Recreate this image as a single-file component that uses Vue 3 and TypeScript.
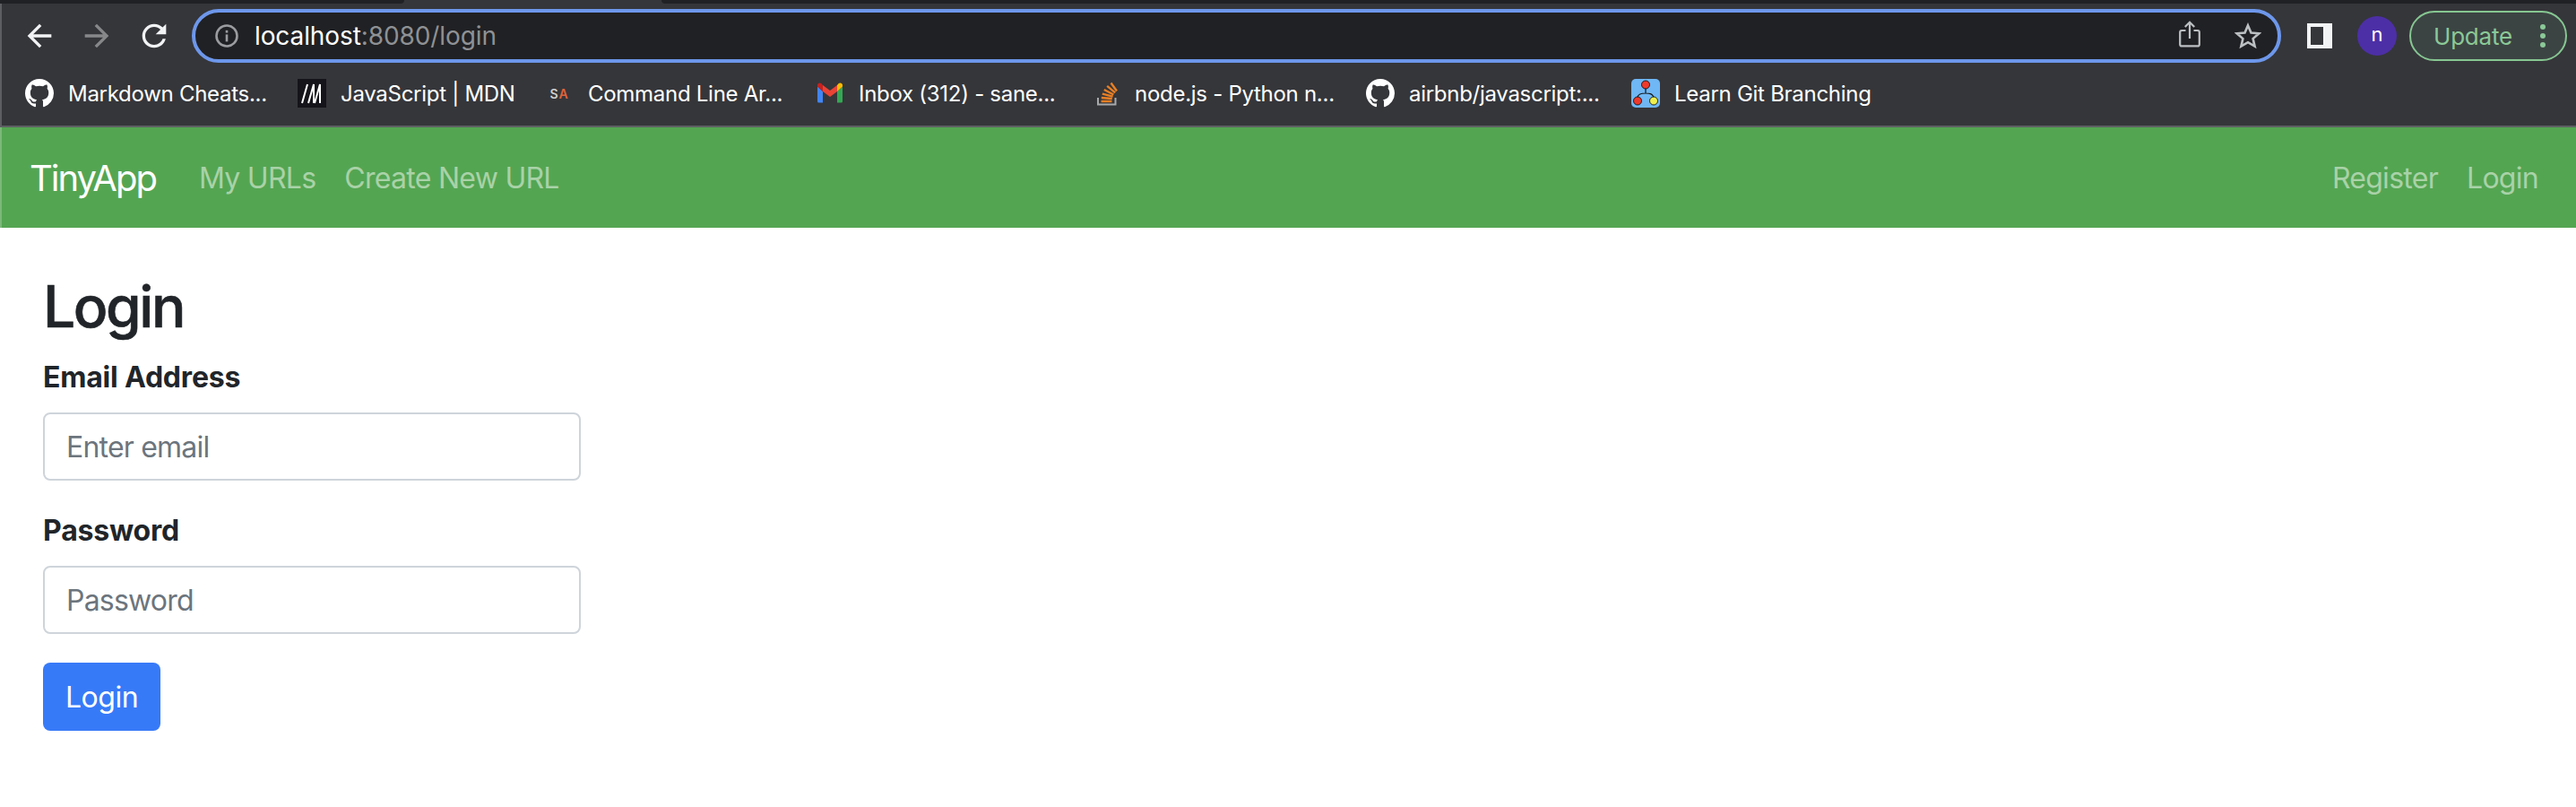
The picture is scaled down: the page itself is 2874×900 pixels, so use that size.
<script setup lang="ts">
interface Bookmark {
  label: string
  icon: string
  width: number
}

const bookmarks: Bookmark[] = [
  { label: 'Markdown Cheats...', icon: 'github', width: 304 },
  { label: 'JavaScript | MDN', icon: 'mdn', width: 276 },
  { label: 'Command Line Ar...', icon: 'sa', width: 302 },
  { label: 'Inbox (312) - sane...', icon: 'gmail', width: 308 },
  { label: 'node.js - Python n...', icon: 'so', width: 306 },
  { label: 'airbnb/javascript:...', icon: 'github', width: 296 },
  { label: 'Learn Git Branching', icon: 'git', width: 300 },
]

const githubPath =
  'M8 0C3.58 0 0 3.58 0 8c0 3.54 2.29 6.53 5.47 7.59.4.07.55-.17.55-.38 0-.19-.01-.82-.01-1.49-2.01.37-2.53-.49-2.69-.94-.09-.23-.48-.94-.82-1.13-.28-.15-.68-.52-.01-.53.63-.01 1.08.58 1.23.82.72 1.21 1.87.87 2.33.66.07-.52.28-.87.51-1.07-1.78-.2-3.64-.89-3.64-3.95 0-.87.31-1.59.82-2.15-.08-.2-.36-1.02.08-2.12 0 0 .67-.21 2.2.82.64-.18 1.32-.27 2-.27.68 0 1.36.09 2 .27 1.53-1.04 2.2-.82 2.2-.82.44 1.1.16 1.92.08 2.12.51.56.82 1.27.82 2.15 0 3.07-1.87 3.75-3.65 3.95.29.25.54.73.54 1.48 0 1.07-.01 1.93-.01 2.2 0 .21.15.46.55.38A8.013 8.013 0 0016 8c0-4.42-3.58-8-8-8z'
</script>

<template>
  <div class="page">
    <header class="chrome">
      <div class="tabstrip">
        <div class="strip strip-left"></div>
        <div class="strip strip-right"></div>
      </div>
      <div class="toolbar">
        <button class="nav-btn" aria-label="Back">
          <svg width="40" height="40" viewBox="0 0 24 24"><path fill="#f1f3f4" d="M20 11H7.83l5.59-5.59L12 4l-8 8 8 8 1.41-1.41L7.83 13H20v-2z" /></svg>
        </button>
        <button class="nav-btn" aria-label="Forward">
          <svg width="40" height="40" viewBox="0 0 24 24"><path fill="#86888a" d="M4 11h12.17l-5.59-5.59L12 4l8 8-8 8-1.41-1.41L16.17 13H4v-2z" /></svg>
        </button>
        <button class="nav-btn" aria-label="Reload">
          <svg width="40" height="40" viewBox="0 0 24 24"><path fill="#f1f3f4" d="M17.65 6.35A7.95 7.95 0 0 0 12 4c-4.42 0-7.99 3.58-7.99 8s3.57 8 7.99 8c3.73 0 6.84-2.55 7.73-6h-2.08c-.82 2.33-3.04 4-5.65 4-3.31 0-6-2.69-6-6s2.69-6 6-6c1.66 0 3.14.69 4.22 1.78L13 11h7V4l-2.35 2.35z" /></svg>
        </button>
        <div class="omnibox">
          <svg class="info" width="28" height="28" viewBox="0 0 28 28">
            <circle cx="14" cy="14" r="11.5" fill="none" stroke="#9a9c9f" stroke-width="2.6" />
            <rect x="12.7" y="12.4" width="2.6" height="8" fill="#9a9c9f" />
            <rect x="12.7" y="7.8" width="2.6" height="2.8" fill="#9a9c9f" />
          </svg>
          <span class="url"><span class="host">localhost</span><span class="path">:8080/login</span></span>
          <svg class="share" width="24" height="30" viewBox="0 0 24 30">
            <path d="M7.5 11H3.2A2 2 0 0 0 1.2 13v13.4a2 2 0 0 0 2 2h17.6a2 2 0 0 0 2-2V13a2 2 0 0 0-2-2h-4.3" fill="none" stroke="#bdc0c3" stroke-width="2.2" />
            <path d="M12 20V2M6.8 7L12 1.8 17.2 7" fill="none" stroke="#bdc0c3" stroke-width="2.2" />
          </svg>
          <svg class="star" width="30" height="30" viewBox="0 0 30 30">
            <path d="M15 3.4l3.5 8.1 8.8.8-6.7 5.8 2 8.6-7.6-4.5-7.6 4.5 2-8.6-6.7-5.8 8.8-.8z" fill="none" stroke="#bdc0c3" stroke-width="2.6" stroke-linejoin="miter" />
          </svg>
        </div>
        <div class="panel-icon"><span class="panel-inner"></span></div>
        <div class="avatar">n</div>
        <div class="update">
          <span class="update-label">Update</span>
          <span class="dots"><i></i><i></i><i></i></span>
        </div>
      </div>
      <nav class="bookmarks">
        <a
          v-for="b in bookmarks"
          :key="b.label"
          class="bookmark"
          :style="{ width: b.width + 'px' }"
        >
          <span class="favicon">
            <svg v-if="b.icon === 'github'" width="32" height="32" viewBox="0 0 16 16"><path fill="#fff" :d="githubPath" /></svg>
            <svg v-else-if="b.icon === 'mdn'" width="32" height="32" viewBox="0 0 32 32">
              <rect width="32" height="32" fill="#15141a" />
              <path d="M5 27L11 6M12 27L18 6V27M19 27L25 6V27" stroke="#fff" stroke-width="2" fill="none" />
            </svg>
            <span v-else-if="b.icon === 'sa'" class="sa"><span class="sa-s">S</span><span class="sa-a">A</span></span>
            <svg v-else-if="b.icon === 'gmail'" width="32" height="32" viewBox="0 0 32 32">
              <path d="M2 8.5V25a1.5 1.5 0 0 0 1.5 1.5H8V14z" fill="#4285f4" />
              <path d="M24 14v12.500h4.500A1.500 1.500 0 0 0 30 25V8.500z" fill="#34a853" />
              <path d="M8 14L16 20l8-6V7L16 13 8 7z" fill="#ea4335" />
              <path d="M24 7v7l6-5.500V7c0-2.200-2.500-3.400-4.300-2z" fill="#fbbc04" />
              <path d="M2 7v1.500L8 14V7L6.300 5C4.500 3.600 2 4.800 2 7z" fill="#c5221f" />
            </svg>
            <svg v-else-if="b.icon === 'so'" width="32" height="32" viewBox="0 0 32 32">
              <path d="M7 21v7.500h19.500V21" fill="none" stroke="#a8a9ab" stroke-width="2" />
              <path d="M10.500 25h12M10.800 21l12 1M11.800 16.600l11.800 3M13.800 12l10.600 5.500M17.200 7.800l9 7.500M21.500 4.500l6.500 9" fill="none" stroke="#e87f24" stroke-width="2.400" />
            </svg>
            <svg v-else width="32" height="32" viewBox="0 0 32 32">
              <rect width="32" height="32" rx="5" fill="#6fb7f5" />
              <path d="M16 11v5M16 16C10 16 8 17 7 20M16 16c6 0 7 1 9 4" fill="none" stroke="#111" stroke-width="1.200" />
              <circle cx="16" cy="6.500" r="4.500" fill="#ee3a2d" stroke="#111" stroke-width=".9" />
              <circle cx="7" cy="24.500" r="4.500" fill="#ee3a2d" stroke="#111" stroke-width=".9" />
              <circle cx="25" cy="24.500" r="4.500" fill="#eef04e" stroke="#111" stroke-width=".9" />
            </svg>
          </span>
          <span class="bookmark-label">{{ b.label }}</span>
        </a>
      </nav>
    </header>

    <nav class="navbar">
      <a class="brand">TinyApp</a>
      <a class="nav-link">My URLs</a>
      <a class="nav-link">Create New URL</a>
      <span class="nav-spacer"></span>
      <a class="nav-link">Register</a>
      <a class="nav-link">Login</a>
    </nav>

    <main class="content">
      <h2 class="title">Login</h2>
      <form class="form" @submit.prevent>
        <label class="label" for="email">Email Address</label>
        <input id="email" class="input" type="email" placeholder="Enter email" />
        <label class="label label-2" for="password">Password</label>
        <input id="password" class="input" type="password" placeholder="Password" />
        <button class="submit" type="submit">Login</button>
      </form>
    </main>
  </div>
</template>

<style>
html, body { margin: 0; background: #fff; }
</style>

<style scoped>
.page {
  width: 2874px;
  height: 900px;
  overflow: hidden;
  background: #fff;
  font-family: Inter, "Liberation Sans", sans-serif;
  color: #212529;
}

/* Browser chrome */
.chrome {
  box-sizing: border-box;
  height: 142px;
  background: #35363a;
  border-left: 2px solid #5d5e62;
  border-bottom: 2px solid #5d6062;
}
.tabstrip { display: flex; justify-content: space-between; height: 4px; margin-left: -2px; }
.strip { background: #202124; height: 4px; }
.strip-left { width: 451px; border-bottom-right-radius: 4px; }
.strip-right { width: 2136px; border-bottom-left-radius: 4px; }

.toolbar { display: flex; align-items: center; height: 72px; padding-left: 10px; padding-right: 10px; }
.nav-btn {
  width: 64px;
  height: 60px;
  padding: 0;
  border: 0;
  background: none;
  display: flex;
  align-items: center;
  justify-content: center;
}
.omnibox {
  box-sizing: border-box;
  flex: 1;
  height: 60px;
  margin-left: 10px;
  display: flex;
  align-items: center;
  padding: 0 18px 0 21px;
  background: #202124;
  border: 4px solid #6d97eb;
  border-radius: 30px;
}
.info { flex: none; margin-right: 17px; }
.url { font-size: 28px; letter-spacing: -0.1px; }
.host { color: #fff; }
.path { color: #8f9194; }
.share { margin-left: auto; margin-right: 38px; margin-top: -4px; }
.panel-icon {
  box-sizing: border-box;
  width: 28px;
  height: 28px;
  margin-left: 29px;
  padding: 4px 10px 4px 4px;
  background: #f1f3f4;
}
.panel-inner { display: block; height: 100%; background: #35363a; }
.avatar {
  width: 44px;
  height: 44px;
  margin-left: 28px;
  border-radius: 50%;
  background: #4c2fa6;
  color: #fff;
  font-size: 22px;
  line-height: 40px;
  text-align: center;
}
.update {
  box-sizing: border-box;
  width: 176px;
  height: 56px;
  margin-left: 14px;
  display: flex;
  align-items: center;
  padding-left: 25px;
  border: 2px solid #86c792;
  border-radius: 28px;
  background: #3c4443;
  color: #8bc997;
}
.update-label { font-size: 26px; letter-spacing: -0.2px; }
.dots { display: flex; flex-direction: column; gap: 4px; margin-left: auto; margin-right: 22px; }
.dots i { display: block; width: 6px; height: 6px; border-radius: 50%; background: #8bc997; }

.bookmarks { display: flex; align-items: center; height: 56px; padding-left: 26px; }
.bookmark { flex: none; display: flex; align-items: center; gap: 16px; color: #fff; }
.favicon { display: flex; width: 32px; height: 32px; align-items: center; justify-content: center; }
.bookmark-label { font-size: 24px; white-space: nowrap; letter-spacing: -0.28px; }
.sa { font-size: 14px; font-weight: 600; letter-spacing: 1px; }
.sa-s { color: #d0d0d0; }
.sa-a { color: #e0633a; }

/* App navbar */
.navbar {
  display: flex;
  align-items: center;
  height: 112px;
  padding: 0 26px 0 32px;
  background: #54a552;
  border-left: 2px solid #7cb97a;
  box-sizing: border-box;
}
.brand { font-size: 40px; color: #fff; margin-right: 32px; letter-spacing: -2px; margin-left: -1px; }
.nav-link { padding: 0 16px; font-size: 32px; color: #a9d2a8; letter-spacing: -0.72px; }
.nav-spacer { flex: 1; }

/* Content */
.content { padding: 50px 0 0 48px; }
.title { margin: 0; font-size: 64px; line-height: 76px; font-weight: 500; letter-spacing: -2.4px; -webkit-text-stroke: 0.6px #212529; }
.form { display: flex; flex-direction: column; align-items: flex-start; }
.label { margin-top: 17px; font-size: 32px; line-height: 48px; font-weight: 700; letter-spacing: -0.2px; }
.label-2 { margin-top: 32px; }
.input {
  box-sizing: border-box;
  width: 600px;
  height: 76px;
  margin-top: 15px;
  padding: 0 24px;
  background: #fff;
  border: 2px solid #ced4da;
  border-radius: 8px;
  font-family: inherit;
  font-size: 32px;
  letter-spacing: -0.8px;
  color: #495057;
  outline: none;
}
.input::placeholder { color: #6c757d; opacity: 1; }
.submit {
  width: 131px;
  height: 76px;
  margin-top: 32px;
  padding: 0;
  border: 0;
  border-radius: 8px;
  background: #377af8;
  color: #fff;
  font-family: inherit;
  font-size: 32px;
  letter-spacing: -0.5px;
}
</style>
